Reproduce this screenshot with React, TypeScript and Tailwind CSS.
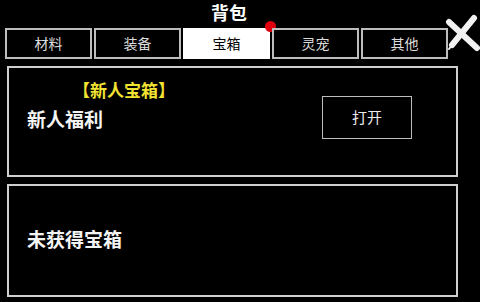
import React from "react";

const tabs = ["材料", "装备", "宝箱", "灵宠", "其他"];
const active = "宝箱";

function CloseIcon() {
  return (
    <svg width="36" height="40" viewBox="0 0 36 40" className="absolute left-[445px] top-[13px]">
      <path d="M4 9 L32 35" stroke="#f2f2f2" strokeWidth="6" strokeLinecap="round" />
      <path d="M29 5 L7 32" stroke="#f2f2f2" strokeWidth="6" strokeLinecap="round" />
      <path d="M7 32 L4 36" stroke="#f2f2f2" strokeWidth="2" strokeLinecap="round" />
    </svg>
  );
}

export default function App() {
  return (
    <div
      className="relative w-[480px] h-[302px] bg-black overflow-hidden text-white"
      style={{ fontFamily: '"Noto Sans CJK SC", "Noto Sans", sans-serif' }}
    >
      <div className="w-[458px] h-[28px] flex justify-center items-start">
        <span className="text-[18px] font-bold leading-[25px]">背包</span>
      </div>

      <div className="ml-[5px] flex gap-[2px] w-[444px]">
        {tabs.map((t) => (
          <div
            key={t}
            className={
              t === active
                ? "relative w-[87px] h-[31px] flex items-center justify-center bg-white text-black text-[14px] border-2 border-white"
                : "relative w-[87px] h-[31px] flex items-center justify-center text-[#dcdcdc] text-[14px] border-2 border-[#bdbdbd]"
            }
          >
            {t}
            {t === active && (
              <span className="absolute -right-[8px] -top-[9px] w-[11px] h-[11px] rounded-full bg-[#e00010]" />
            )}
          </div>
        ))}
      </div>

      <div className="mx-[7px] mt-[7px] w-[451px] flex flex-col gap-[7px]">
        <div className="h-[111px] border-2 border-[#cfcfcf] flex">
          <div className="flex flex-col pt-[11px] pl-[18px]">
            <span className="ml-[46px] text-[17px] font-bold leading-[22px] text-[#f2e232]">【新人宝箱】</span>
            <span className="mt-[5px] text-[19px] font-bold leading-[26px] text-[#f4f4f4]">新人福利</span>
          </div>
          <div className="ml-auto mr-[44px] mt-[28px]">
            <button className="w-[90px] h-[43px] border border-[#bdbdbd] text-[15px] text-[#ececec] bg-black">
              打开
            </button>
          </div>
        </div>

        <div className="h-[113px] border-2 border-[#cfcfcf] flex items-center pl-[18px]">
          <span className="text-[19px] font-bold leading-[26px] text-[#f4f4f4] mt-[-3px]">未获得宝箱</span>
        </div>
      </div>

      <CloseIcon />
    </div>
  );
}
